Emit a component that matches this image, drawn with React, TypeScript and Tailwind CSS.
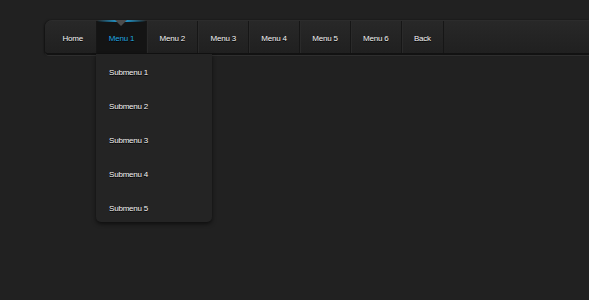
const items = ["Home", "Menu 1", "Menu 2", "Menu 3", "Menu 4", "Menu 5", "Menu 6", "Back"];
const subs = ["Submenu 1", "Submenu 2", "Submenu 3", "Submenu 4", "Submenu 5"];

export default function App() {
  return (
    <div
      className="relative w-[589px] h-[300px] overflow-hidden bg-[#212121] pt-[20px] pl-[45px]"
      style={{ fontFamily: '"Liberation Sans", Arial, sans-serif' }}
    >
      {/* Nav bar */}
      <div className="relative">
        <ul className="flex h-[35px] rounded-tl-[7px] rounded-bl-[4px] bg-gradient-to-b from-[#282828] to-[#202020] border-t border-[#2c2c2c] border-b-2 border-b-[#121212] shadow-[0_1px_0_#2e2e2e,-1px_0_2px_rgba(0,0,0,0.5)]">
          {items.map((label, i) => {
            const active = i === 1;
            return (
              <li
                key={label}
                className={`relative flex items-center h-full pt-[3px] text-[8px] tracking-[-0.2px] [text-shadow:0_1px_0_#000] border-r border-r-[#161616] shadow-[inset_1px_0_0_#2a2a2a] ${
                  i === 0 ? "pl-[17.5px] pr-[12.5px] shadow-none" : "px-[12.2px]"
                } ${active ? "bg-[#141414] text-[#22a8e2] shadow-none" : "text-[#f4f4f4]"}`}
              >
                {active && (
                  <>
                    <span className="absolute -top-px left-0 right-0 h-[2px] bg-gradient-to-r from-transparent via-[#22b0f0] to-transparent" />
                    <span className="absolute -top-px left-1/2 -translate-x-1/2 w-0 h-0 border-l-[6px] border-r-[6px] border-t-[6px] border-l-transparent border-r-transparent border-t-[#4c4c4c]" />
                  </>
                )}
                {label}
              </li>
            );
          })}
        </ul>
      </div>

      {/* Dropdown */}
      <div className="absolute left-[96px] top-[54px] w-[116px] h-[168px] overflow-hidden pt-[2px] bg-[#242424] rounded-b-[5px] shadow-[0_2px_4px_rgba(0,0,0,0.6)]">
        {subs.map((s) => (
          <div
            key={s}
            className="flex items-center h-[34px] pl-[13px] text-[8px] tracking-[-0.2px] text-[#f4f4f4] [text-shadow:0_1px_0_#000]"
          >
            {s}
          </div>
        ))}
      </div>
    </div>
  );
}
